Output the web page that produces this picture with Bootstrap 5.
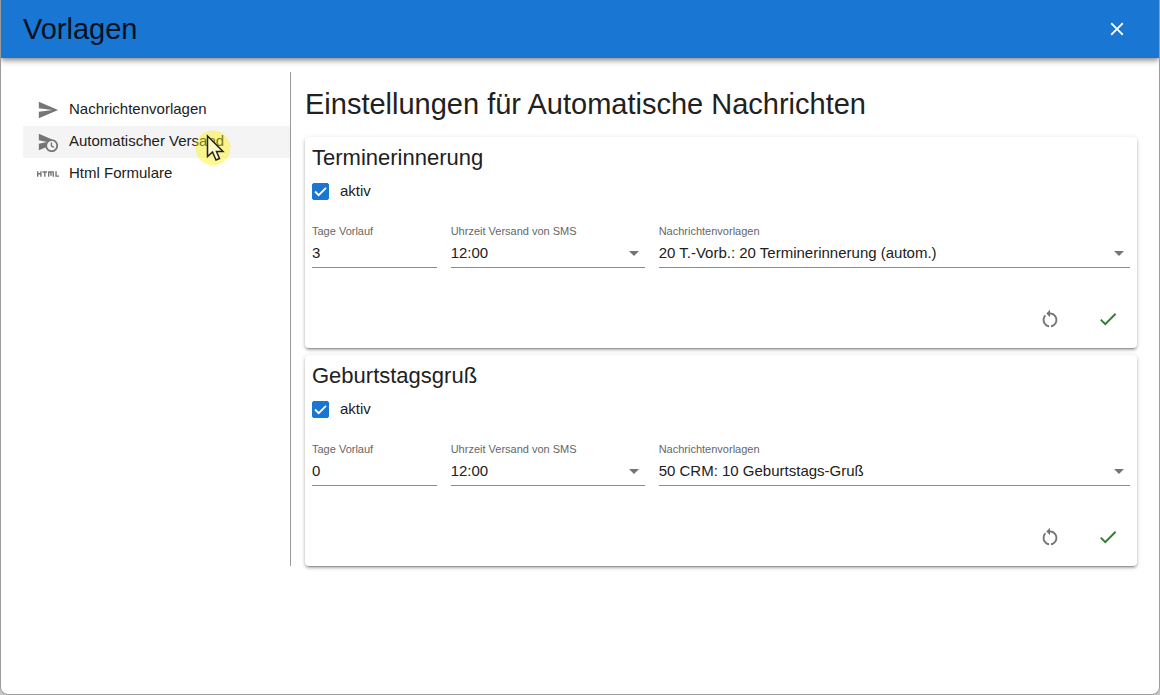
<!DOCTYPE html>
<html lang="de">
<head>
<meta charset="utf-8">
<meta name="viewport" content="width=device-width, initial-scale=1">
<title>Vorlagen</title>
<link href="https://cdn.jsdelivr.net/npm/bootstrap@5.3.0/dist/css/bootstrap.min.css" rel="stylesheet">
<style>
  body { font-family: "Liberation Sans", Arial, sans-serif; font-size: 15px; line-height: 20px; color: #212121; background: #c8c8c8; }
  .dialog { border: 1px solid #9c9c9c; border-top: 0; border-radius: 0 0 8px 8px; background: #fff; }
  .dialog-bar { background: #1976d2; height: 58px; padding: 0 22px; box-shadow: 0 2px 4px -1px rgba(0,0,0,.3), 0 4px 5px rgba(0,0,0,.16), 0 1px 8px rgba(0,0,0,.14); }
  .dialog-title { font-size: 29px; line-height: 36px; font-weight: 400; color: #04111f; }
  .dialog-body { padding: 14px 22px; }
  .side { width: 268px; border-right: 1px solid #999; padding-top: 22px; }
  .side-link { height: 32px; padding-left: 14px; gap: 10px; color: #212121; text-decoration: none; }
  .side-link span { padding-bottom: 2px; }
  .side-link.active { background: #f4f4f4; }
  .side-icon { width: 22px; height: 22px; fill: #757575; }
  .main-pane { padding-left: 14px; }
  .main-title { font-size: 29px; line-height: 36px; margin: 14px 0 15px; font-weight: 400; }
  .panel { border: 0; border-radius: 4px; padding: 7px; margin-bottom: 7px; box-shadow: 0 3px 1px -2px rgba(0,0,0,.2), 0 2px 3px rgba(0,0,0,.24), 0 1px 5px rgba(0,0,0,.12); }
  .panel:last-child { margin-bottom: 0; }
  .panel h2 { font-size: 22px; line-height: 28px; margin: 0 0 9px; font-weight: 400; }
  .tick { gap: 11px; min-height: 20px; }
  .tick .form-check-input { width: 17px; height: 17px; margin: 0; border-radius: 2px; border-color: #1976d2; }
  .tick .form-check-input:checked { background-color: #1976d2; border-color: #1976d2; background-size: 15px; background-image: url("data:image/svg+xml,%3Csvg xmlns='http://www.w3.org/2000/svg' viewBox='0 0 15 15'%3E%3Cpath d='M2 7.500 5.700 11.200 13 3.900' fill='none' stroke='%23fff' stroke-width='1.800'/%3E%3C/svg%3E"); }
  .fields { --bs-gutter-x: 14px; margin-top: 23px; }
  .fields label { display: block; font-size: 11px; line-height: 14px; color: #666; }
  .line { display: block; width: 100%; height: 30px; border: 0; border-bottom: 1px solid #8c8c8c; border-radius: 0; padding: 0; background: transparent; color: #212121; font-size: 15px; line-height: 20px; outline: 0; appearance: none; }
  select.line { background: url("data:image/svg+xml,%3Csvg xmlns='http://www.w3.org/2000/svg' width='10' height='5'%3E%3Cpath d='M0 0h10L5 5z' fill='%23757575'/%3E%3C/svg%3E") no-repeat right 6px top 13px; padding-right: 22px; }
  .actions { gap: 34px; padding: 39px 10px 10px 0; }
  .icon-btn { display: flex; align-items: center; justify-content: center; border: 0; background: none; padding: 0; width: 24px; height: 24px; }
  .pointer { position: absolute; left: 171px; top: 4px; width: 40px; height: 40px; pointer-events: none; }
</style>
</head>
<body>
<div class="dialog min-vh-100 overflow-hidden">
  <header class="dialog-bar d-flex align-items-center justify-content-between">
    <h1 class="dialog-title m-0">Vorlagen</h1>
    <button class="icon-btn me-2" type="button" aria-label="Schließen">
      <svg width="22" height="22" viewBox="0 0 24 24" fill="#fff"><path d="M19 6.410 17.590 5 12 10.590 6.410 5 5 6.410 10.590 12 5 17.590 6.410 19 12 13.410 17.590 19 19 17.590 13.410 12z"/></svg>
    </button>
  </header>
  <div class="dialog-body d-flex">
    <nav class="side flex-shrink-0">
      <a class="side-link d-flex align-items-center" href="#">
        <svg class="side-icon" viewBox="0 0 24 24"><path d="M2 21 23 12 2 3V10L17 12 2 14z"/></svg>
        <span>Nachrichtenvorlagen</span>
      </a>
      <a class="side-link active d-flex align-items-center position-relative" href="#">
        <svg class="side-icon" viewBox="0 0 24 24"><path d="M16.500 12.500H15v4l3 2 .75-1.230-2.250-1.520V12.500zM16 9L2 3v7l9 2-9 2v7l7.270-3.110C10.090 20.830 12.790 23 16 23c3.860 0 7-3.140 7-7s-3.140-7-7-7zm0 12c-2.750 0-4.980-2.220-5-4.970v-.070c.02-2.740 2.250-4.970 5-4.970 2.760 0 5 2.240 5 5s-2.250 5.010-5 5.010z"/></svg>
        <span>Automatischer Versand</span>
        <svg class="pointer" viewBox="0 0 40 40" aria-hidden="true"><circle cx="19" cy="18" r="17.500" fill="#fff200" fill-opacity=".42"/><path d="M13.500 6V26.500L18.500 22 22 30 25.500 28.500 22.500 21.500H29z" fill="#fdfbc8" stroke="#222" stroke-width="1.500"/></svg>
      </a>
      <a class="side-link d-flex align-items-center" href="#">
        <svg class="side-icon" viewBox="0 0 24 24"><path d="M3.500 9H5v6H3.500v-2.500h-2V15H0V9h1.500v2h2V9zm14 0H13c-.55 0-1 .45-1 1v5h1.500v-4.500h1V14H16v-3.510h1V15h1.500v-5c0-.55-.45-1-1-1zM11 9H6v1.500h1.750V15h1.500v-4.500H11V9zm13 6v-1.500h-2.500V9H20v6h4z"/></svg>
        <span>Html Formulare</span>
      </a>
    </nav>
    <main class="main-pane flex-grow-1">
      <h2 class="main-title">Einstellungen für Automatische Nachrichten</h2>

      <form class="panel card">
        <h2>Terminerinnerung</h2>
        <div class="tick d-flex align-items-center">
          <input class="form-check-input" type="checkbox" id="aktiv1" checked><label for="aktiv1">aktiv</label>
        </div>
        <div class="fields row">
          <div class="col-2"><label for="tage1">Tage Vorlauf</label><input class="line" id="tage1" type="text" value="3"></div>
          <div class="col-3"><label for="zeit1">Uhrzeit Versand von SMS</label><select class="line" id="zeit1"><option>12:00</option></select></div>
          <div class="col-7"><label for="vorlage1">Nachrichtenvorlagen</label><select class="line" id="vorlage1"><option>20 T.-Vorb.: 20 Terminerinnerung (autom.)</option></select></div>
        </div>
        <div class="actions d-flex justify-content-end">
          <button class="icon-btn" type="reset" aria-label="Zurücksetzen"><svg width="22" height="22" viewBox="0 0 24 24" fill="#757575"><path d="M12 5V2L8 6l4 4V7c3.310 0 6 2.690 6 6 0 2.970-2.170 5.430-5 5.910v2.020c3.950-.49 7-3.850 7-7.930 0-4.420-3.580-8-8-8zm-6 8c0-1.650.67-3.150 1.760-4.240L6.340 7.340C4.900 8.790 4 10.790 4 13c0 4.080 3.050 7.440 7 7.930v-2.020c-2.830-.48-5-2.940-5-5.910z"/></svg></button>
          <button class="icon-btn" type="submit" aria-label="Speichern"><svg width="22" height="22" viewBox="0 0 24 24" fill="#2e7d32"><path d="M9 16.170 4.830 12l-1.420 1.410L9 19 21 7l-1.410-1.410z"/></svg></button>
        </div>
      </form>

      <form class="panel card">
        <h2>Geburtstagsgruß</h2>
        <div class="tick d-flex align-items-center">
          <input class="form-check-input" type="checkbox" id="aktiv2" checked><label for="aktiv2">aktiv</label>
        </div>
        <div class="fields row">
          <div class="col-2"><label for="tage2">Tage Vorlauf</label><input class="line" id="tage2" type="text" value="0"></div>
          <div class="col-3"><label for="zeit2">Uhrzeit Versand von SMS</label><select class="line" id="zeit2"><option>12:00</option></select></div>
          <div class="col-7"><label for="vorlage2">Nachrichtenvorlagen</label><select class="line" id="vorlage2"><option>50 CRM: 10 Geburtstags-Gruß</option></select></div>
        </div>
        <div class="actions d-flex justify-content-end">
          <button class="icon-btn" type="reset" aria-label="Zurücksetzen"><svg width="22" height="22" viewBox="0 0 24 24" fill="#757575"><path d="M12 5V2L8 6l4 4V7c3.310 0 6 2.690 6 6 0 2.970-2.170 5.430-5 5.910v2.020c3.950-.49 7-3.850 7-7.930 0-4.420-3.580-8-8-8zm-6 8c0-1.650.67-3.150 1.760-4.240L6.340 7.340C4.900 8.790 4 10.790 4 13c0 4.080 3.050 7.440 7 7.930v-2.020c-2.830-.48-5-2.940-5-5.910z"/></svg></button>
          <button class="icon-btn" type="submit" aria-label="Speichern"><svg width="22" height="22" viewBox="0 0 24 24" fill="#2e7d32"><path d="M9 16.170 4.830 12l-1.420 1.410L9 19 21 7l-1.410-1.410z"/></svg></button>
        </div>
      </form>
    </main>
  </div>
</div>
<script src="https://cdn.jsdelivr.net/npm/bootstrap@5.3.0/dist/js/bootstrap.bundle.min.js"></script>
</body>
</html>
